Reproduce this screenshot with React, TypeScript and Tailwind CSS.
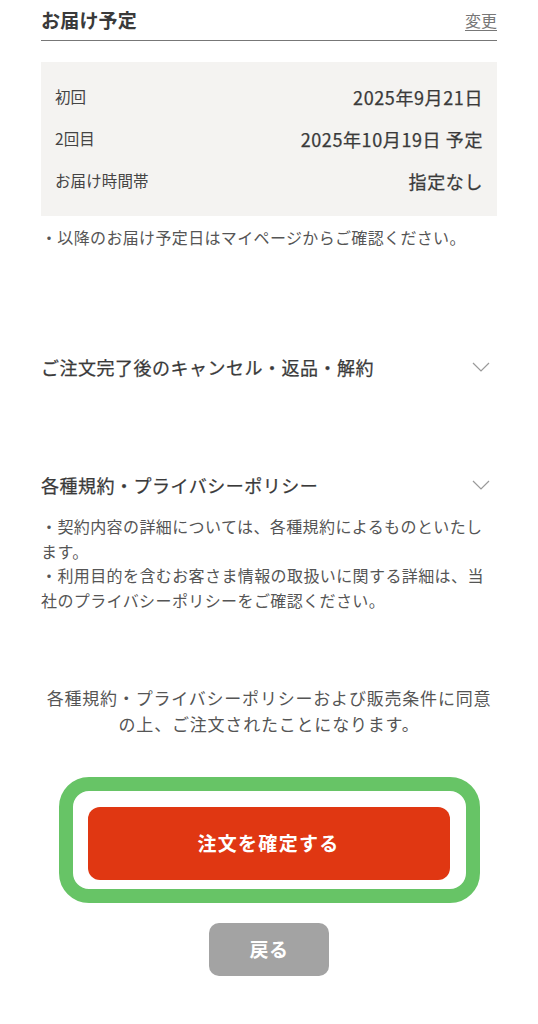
import React from "react";

function Chevron() {
  return (
    <svg width="18" height="10" viewBox="0 0 18 10" fill="none" aria-hidden="true">
      <polyline points="1,1 9,9 17,1" stroke="#9a9a9a" strokeWidth="1.2" fill="none" />
    </svg>
  );
}

function Row({ label, value }: { label: string; value: string }) {
  return (
    <div className="h-[42px] flex items-center justify-between">
      <span className="text-[15.5px] tracking-[0.1px] text-[#444444]">{label}</span>
      <span className="text-[18px] tracking-[0.6px] font-normal text-[#3a3a3a] [-webkit-text-stroke:0.25px_#3a3a3a]">
        {value}
      </span>
    </div>
  );
}

export default function App() {
  return (
    <div
      className="w-[538px] min-h-[1024px] bg-white px-[41px] pb-[48px] text-[#3d3d3d]"
      style={{ fontFamily: '"Noto Sans CJK JP", "Noto Sans", sans-serif' }}
    >
      <div className="h-[41px] flex items-center justify-between border-b border-[#777777]">
        <span className="text-[19px] font-bold tracking-[0.2px] text-[#3a3a3a]">お届け予定</span>
        <span className="text-[16px] text-[#777777] underline underline-offset-[3px]">変更</span>
      </div>

      <div className="mt-[21px] bg-[#f4f3f1] px-[14px] py-[14px]">
        <Row label="初回" value="2025年9月21日" />
        <Row label="2回目" value="2025年10月19日 予定" />
        <Row label="お届け時間帯" value="指定なし" />
      </div>

      <p className="mt-[8px] text-[16px] leading-[26px] tracking-[0.35px] text-[#555555]">
        ・以降のお届け予定日はマイページからご確認ください。
      </p>

      <div className="mt-[102px] h-[30px] flex items-center justify-between pr-[7px]">
        <span className="text-[18px] font-normal tracking-[0.5px] text-[#3a3a3a] [-webkit-text-stroke:0.25px_#3a3a3a]">
          ご注文完了後のキャンセル・返品・解約
        </span>
        <Chevron />
      </div>

      <div className="mt-[88px] h-[30px] flex items-center justify-between pr-[7px]">
        <span className="text-[18px] font-normal tracking-[0.5px] text-[#3a3a3a] [-webkit-text-stroke:0.25px_#3a3a3a]">
          各種規約・プライバシーポリシー
        </span>
        <Chevron />
      </div>

      <div className="mt-[14px] text-[16px] leading-[24.5px] tracking-[0.4px] text-[#555555]">
        <p>・契約内容の詳細については、各種規約によるものといたします。</p>
        <p>・利用目的を含むお客さま情報の取扱いに関する詳細は、当社のプライバシーポリシーをご確認ください。</p>
      </div>

      <p className="mt-[73px] text-center text-[17px] leading-[26px] tracking-[0.8px] text-[#555555]">
        各種規約・プライバシーポリシーおよび販売条件に同意の上、ご注文されたことになります。
      </p>

      <div className="mt-[40px] mx-auto w-[421px] border-[14px] border-[#67c466] rounded-[30px] pt-[16px] pb-[9px] pl-[15px] pr-[16px]">
        <button className="w-full h-[73px] rounded-[12px] bg-[#e03712] text-white text-[19px] font-bold tracking-[1.3px] flex items-center justify-center">
          注文を確定する
        </button>
      </div>

      <button className="mt-[20px] mx-auto block w-[120px] h-[53px] rounded-[10px] bg-[#a3a3a3] text-white text-[19px] font-bold tracking-[0.5px]">
        戻る
      </button>
    </div>
  );
}
